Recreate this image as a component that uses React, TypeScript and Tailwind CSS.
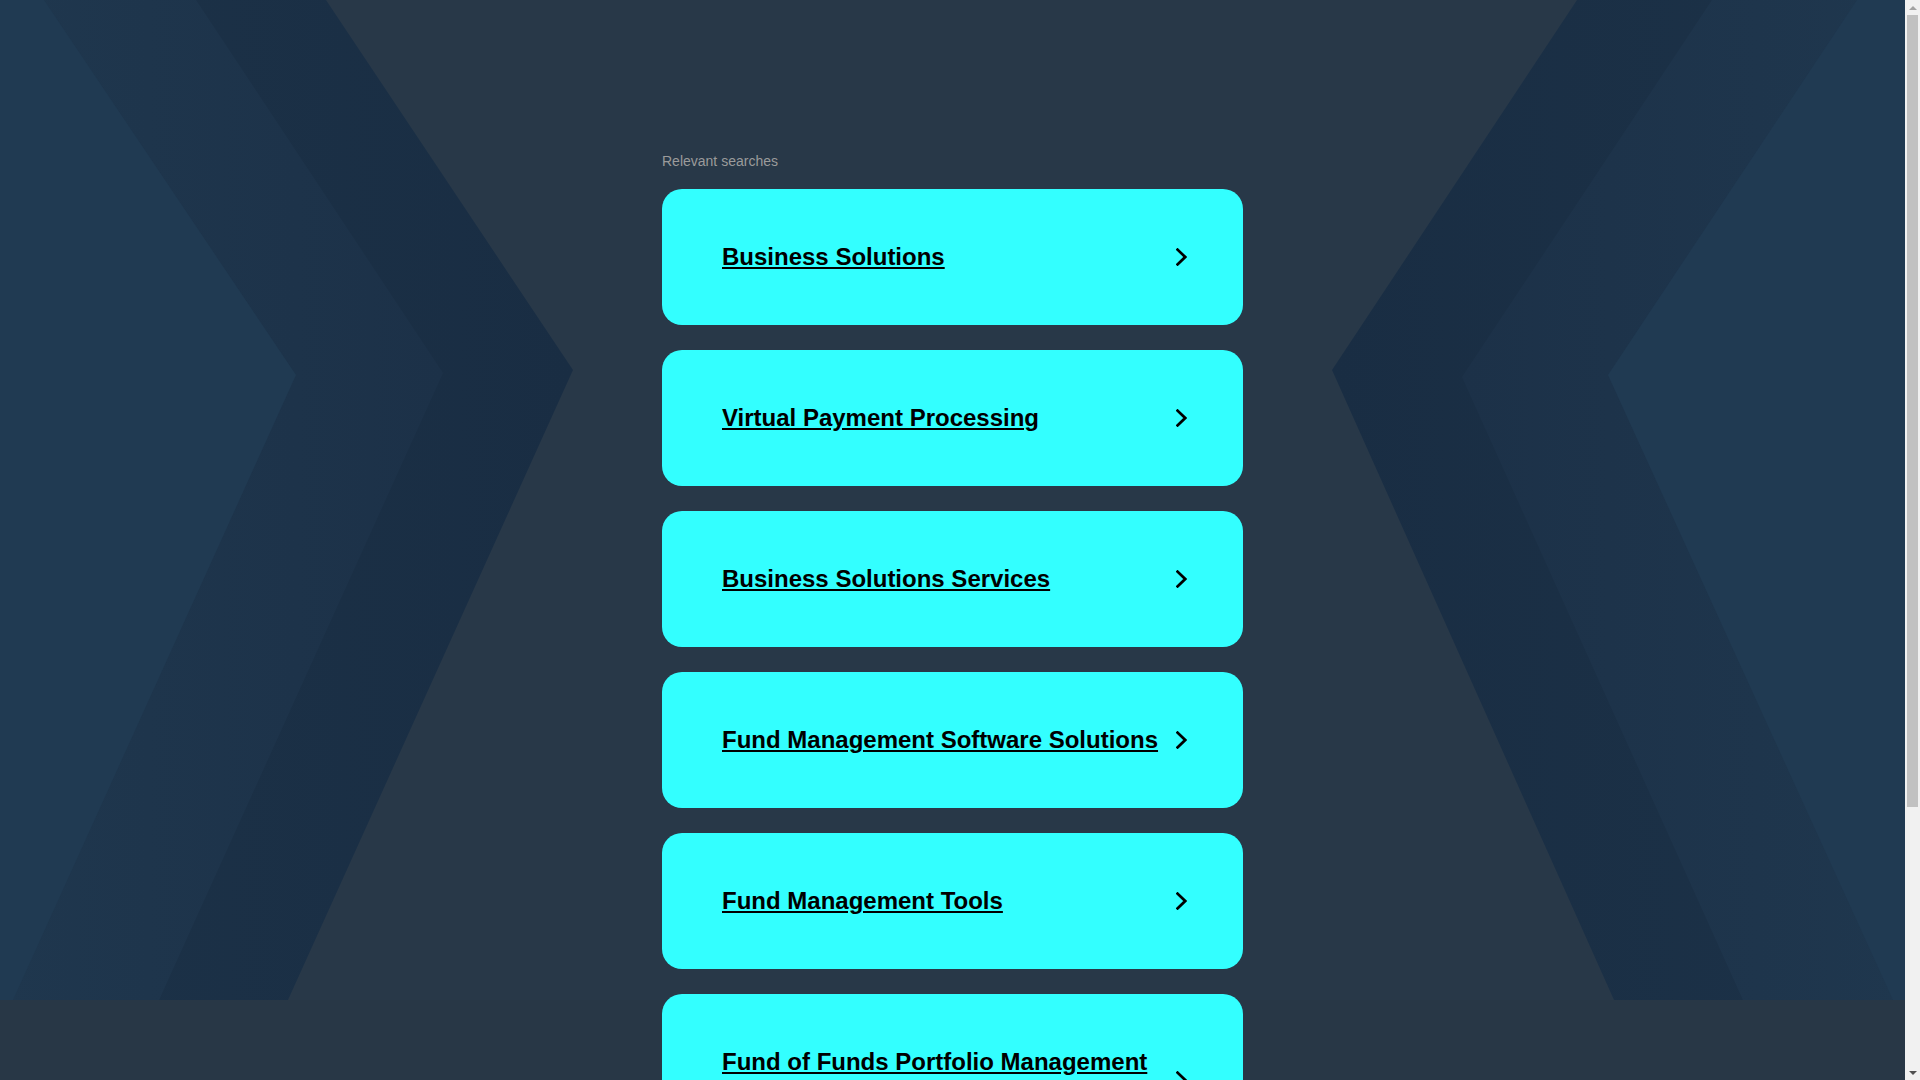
import React from 'react';

const searches = [
  'Business Solutions',
  'Virtual Payment Processing',
  'Business Solutions Services',
  'Fund Management Software Solutions',
  'Fund Management Tools',
  'Fund of Funds Portfolio Management Tools',
];

function Chevron() {
  return (
    <svg width="11" height="18" viewBox="0 0 11 18" className="shrink-0 ml-[12px]" aria-hidden="true">
      <path d="M1.6 1.6 L9.2 9 L1.6 16.4" fill="none" stroke="#000" strokeWidth="2.7" strokeLinecap="square" strokeLinejoin="miter" />
    </svg>
  );
}

// background chevrons, drawn at page pixel coords (1905 wide, 1000 tall)
function Backdrop() {
  return (
    <svg
      className="absolute top-0 left-0 w-full h-[1000px] pointer-events-none"
      viewBox="0 0 1905 1000"
      preserveAspectRatio="none"
      aria-hidden="true"
    >
      <defs>
        <linearGradient id="lOuter" x1="0" y1="0" x2="1" y2="0">
          <stop offset="0" stopColor="#1c3248" />
          <stop offset="1" stopColor="#192d43" />
        </linearGradient>
        <linearGradient id="lMid" x1="0" y1="0" x2="1" y2="0">
          <stop offset="0" stopColor="#1f374e" />
          <stop offset="1" stopColor="#1c3148" />
        </linearGradient>
        <linearGradient id="rOuter" x1="1" y1="0" x2="0" y2="0">
          <stop offset="0" stopColor="#1c3248" />
          <stop offset="1" stopColor="#192d43" />
        </linearGradient>
        <linearGradient id="rMid" x1="1" y1="0" x2="0" y2="0">
          <stop offset="0" stopColor="#1f374e" />
          <stop offset="1" stopColor="#1c3148" />
        </linearGradient>
      </defs>
      <rect x="0" y="0" width="1905" height="1000" fill="#283848" />

      {/* left */}
      <polygon points="0,0 326,0 573,370 288,1000 0,1000" fill="url(#lOuter)" />
      <polygon points="0,0 196,0 443,373 159,1000 0,1000" fill="url(#lMid)" />
      <polygon points="0,0 44,0 296,375 13,1000 0,1000" fill="#203a52" />

      {/* right */}
      <polygon points="1905,0 1577,0 1332,370 1614,1000 1905,1000" fill="url(#rOuter)" />
      <polygon points="1905,0 1712,0 1462,377 1743,1000 1905,1000" fill="url(#rMid)" />
      <polygon points="1905,0 1857,0 1608,375 1893,1000 1905,1000" fill="#203a52" />
    </svg>
  );
}

// classic scrollbar as seen in the screenshot
function FakeScrollbar() {
  return (
    <div className="fixed top-0 right-0 h-screen w-[15px] bg-[#f1f1f1] flex flex-col items-center">
      <div className="h-[15px] w-full flex items-center justify-center">
        <div className="w-0 h-0 border-l-[4px] border-r-[4px] border-b-[4px] border-l-transparent border-r-transparent border-b-[#a3a3a3]" />
      </div>
      <div className="h-[792px] w-[11px] bg-[#c1c1c1]" />
      <div className="flex-1" />
      <div className="h-[15px] w-full flex items-center justify-center">
        <div className="w-0 h-0 border-l-[4px] border-r-[4px] border-t-[4px] border-l-transparent border-r-transparent border-t-[#505050]" />
      </div>
    </div>
  );
}

export default function App() {
  return (
    <div className="relative min-h-[1432px] mr-[15px] bg-[#283746] font-['Liberation_Sans',Arial,sans-serif]">
      <Backdrop />

      <div className="relative w-[581px] mx-auto pt-[153px] pb-[60px]">
        <p className="text-[14px] leading-[16px] text-[#9b9b9b] mb-[20px]">Relevant searches</p>

        <div className="flex flex-col gap-[25px]">
          {searches.map((s) => (
            <a
              key={s}
              href="#"
              className="flex items-center bg-[#33ffff] rounded-[20px] pl-[60px] pr-[56px] py-[50px]"
            >
              <span className="flex-1 text-[24px] leading-[36px] font-bold text-black underline">{s}</span>
              <Chevron />
            </a>
          ))}
        </div>
      </div>

      <FakeScrollbar />
    </div>
  );
}
